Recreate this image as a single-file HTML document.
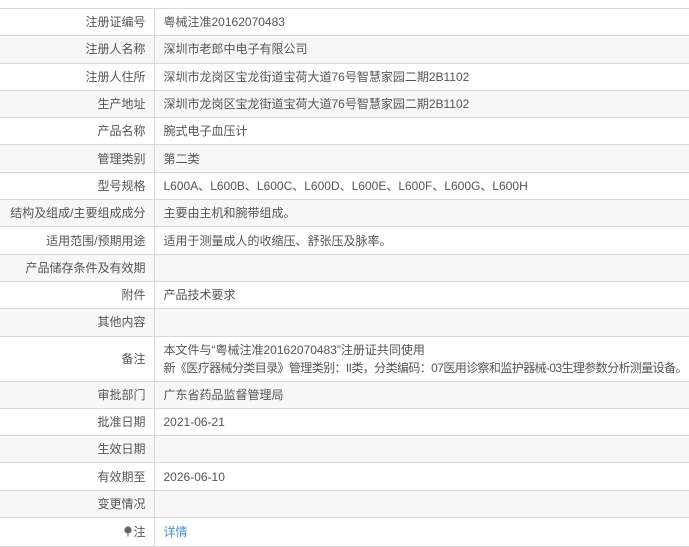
<!DOCTYPE html>
<html><head><meta charset="utf-8"><style>
body{margin:0;background:#fff;font-family:"Liberation Sans","Noto Sans CJK SC",sans-serif;font-size:12px;color:#555;}
table{position:absolute;left:0;top:8px;width:700px;border-collapse:collapse;table-layout:fixed;}
td{border-top:1px solid #d8d8d8;border-bottom:1px solid #d8d8d8;height:26.3px;padding:0;line-height:16px;white-space:nowrap;overflow:visible;}
td.l{text-align:right;padding-right:8px;border-right:1px solid #d8d8d8;}
td.v{padding-left:9px;}
tr:nth-child(even) td{background:#f7f7f7;}
a{color:#4a90d9;text-decoration:none;}
</style></head><body>
<table>
<colgroup><col style="width:154px"><col style="width:546px"></colgroup>
<tr><td class="l">注册证编号</td><td class="v">粤械注准20162070483</td></tr>
<tr><td class="l">注册人名称</td><td class="v">深圳市老郎中电子有限公司</td></tr>
<tr><td class="l">注册人住所</td><td class="v">深圳市龙岗区宝龙街道宝荷大道76号智慧家园二期2B1102</td></tr>
<tr><td class="l">生产地址</td><td class="v">深圳市龙岗区宝龙街道宝荷大道76号智慧家园二期2B1102</td></tr>
<tr><td class="l">产品名称</td><td class="v">腕式电子血压计</td></tr>
<tr><td class="l">管理类别</td><td class="v">第二类</td></tr>
<tr><td class="l">型号规格</td><td class="v">L600A、L600B、L600C、L600D、L600E、L600F、L600G、L600H</td></tr>
<tr><td class="l">结构及组成/主要组成成分</td><td class="v">主要由主机和腕带组成。</td></tr>
<tr><td class="l">适用范围/预期用途</td><td class="v">适用于测量成人的收缩压、舒张压及脉率。</td></tr>
<tr><td class="l">产品储存条件及有效期</td><td class="v"></td></tr>
<tr><td class="l">附件</td><td class="v">产品技术要求</td></tr>
<tr><td class="l">其他内容</td><td class="v"></td></tr>
<tr><td class="l" style="height:44px">备注</td><td class="v" style="height:44px;line-height:18px">本文件与“粤械注准20162070483”注册证共同使用<br><span style="letter-spacing:-0.6px">新《医疗器械分类目录》管理类别：II类，分类编码：07医用诊察和监护器械-03生理参数分析测量设备。</span></td></tr>
<tr><td class="l">审批部门</td><td class="v">广东省药品监督管理局</td></tr>
<tr><td class="l">批准日期</td><td class="v">2021-06-21</td></tr>
<tr><td class="l">生效日期</td><td class="v"></td></tr>
<tr><td class="l">有效期至</td><td class="v">2026-06-10</td></tr>
<tr><td class="l">变更情况</td><td class="v"></td></tr>
<tr><td class="l" style="height:28px"><svg width="8" height="11" viewBox="0 0 8 11" style="vertical-align:-1px;margin-right:1px"><circle cx="4" cy="4" r="3.6" fill="#666"/><rect x="3.3" y="7" width="1.4" height="3.5" fill="#888"/></svg>注</td><td class="v" style="height:28px"><a>详情</a></td></tr>
</table>
</body></html>
